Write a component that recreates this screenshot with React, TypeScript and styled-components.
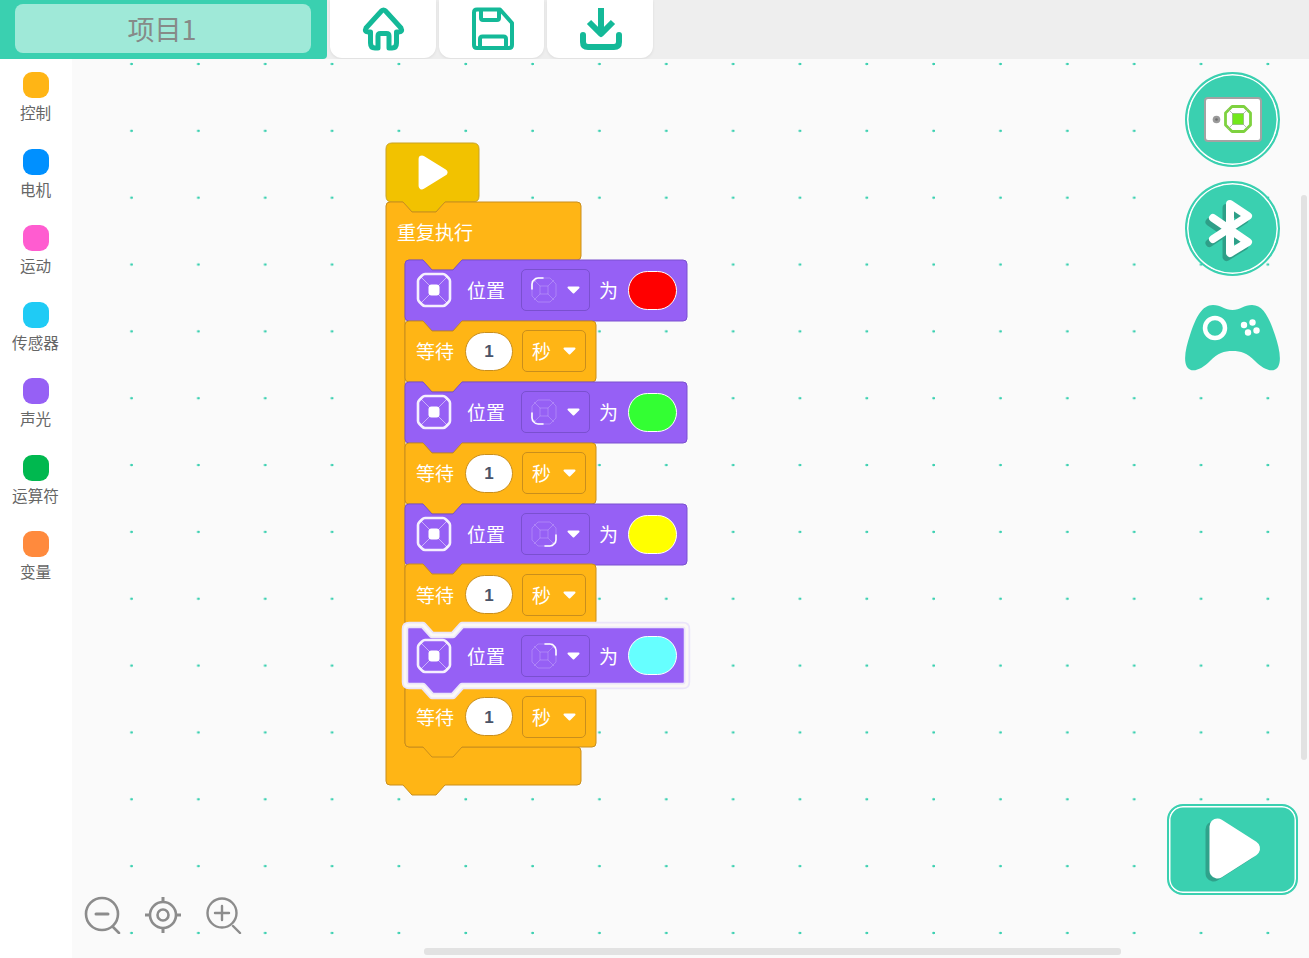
import React from 'react'
import styled, { createGlobalStyle } from 'styled-components'

type Corner = 'tl' | 'tr' | 'br' | 'bl'

const TEAL = '#3ad0b0'
const ICON_GREEN = '#14b998'
const ORANGE = '#ffb515'
const ORANGE_LINE = '#c98e1c'
const PURPLE = '#9660f5'
const PURPLE_LINE = '#7a50cf'

const GlobalStyle = createGlobalStyle`
  html, body {
    margin: 0;
    height: 100%;
    overflow: hidden;
    background: #fafafa;
  }
  #root {
    height: 100%;
  }
`

/* PAGE STYLES */
const Page = styled.div`
  width: 100%;
  height: 100vh;
  display: flex;
  flex-direction: column;
  font-family: 'Noto Sans CJK SC', 'Noto Sans', sans-serif;
`

const TopBar = styled.div`
  height: 59px;
  flex: none;
  display: flex;
  gap: 3px;
  background-color: #eeeeee;
`

const ProjectPanel = styled.div`
  width: 327px;
  height: 59px;
  box-sizing: border-box;
  padding: 4px 16px 6px 15px;
  background-color: ${TEAL};
  border-bottom-right-radius: 4px;
`

const ProjectName = styled.div`
  height: 100%;
  box-sizing: border-box;
  padding-right: 2px;
  display: flex;
  align-items: center;
  justify-content: center;
  background-color: #9fe9d8;
  border-radius: 8px;
  color: #868a88;
  font-size: 27px;
`

const ToolButton = styled.div`
  width: 105.6px;
  height: 58px;
  box-sizing: border-box;
  padding-left: 3px;
  display: flex;
  align-items: center;
  justify-content: center;
  background-color: #ffffff;
  border-bottom-left-radius: 12px;
  border-bottom-right-radius: 12px;
  box-shadow: 0 1px 3px rgba(0, 0, 0, 0.08);
`

const Body = styled.div`
  flex: 1;
  display: flex;
  min-height: 0;
`

const Sidebar = styled.div`
  width: 72px;
  flex: none;
  box-sizing: border-box;
  padding-right: 1px;
  background-color: #ffffff;
`

const Category = styled.div`
  height: 76.5px;
  box-sizing: border-box;
  padding-top: 13px;
  display: flex;
  flex-direction: column;
  align-items: center;
  color: #666666;
  font-size: 15.6px;
  line-height: 20px;
`

const CategoryDot = styled.div<{ $color: string }>`
  width: 26px;
  height: 26px;
  margin-bottom: 4px;
  border-radius: 9px;
  background-color: ${({ $color }) => $color};
`

const Canvas = styled.div`
  position: relative;
  flex: 1;
  overflow: hidden;
  background-color: #fafafa;
  background-image: radial-gradient(circle at 59.5px 5px, ${TEAL} 1px, transparent 1.6px);
  background-size: 66.85px 66.85px;
`

/* BLOCK STYLES */
const Script = styled.div`
  position: absolute;
  left: 314px;
  top: 84px;
  width: 320px;
`

const Shape = styled.svg`
  position: absolute;
  left: 0;
  top: 0;
  overflow: visible;
`

const HatBlock = styled.div`
  position: relative;
  width: 93px;
  height: 59px;
  display: flex;
  align-items: center;
  justify-content: center;
`

const HatGlyph = styled.div`
  position: relative;
  display: flex;
`

const LoopBlock = styled.div`
  position: relative;
  width: 195px;
  height: 583px;
`

const LoopTitle = styled.div`
  position: relative;
  height: 58px;
  box-sizing: border-box;
  padding-left: 11px;
  display: flex;
  align-items: center;
  color: #ffffff;
  font-size: 19px;
`

const LoopBody = styled.div`
  display: flex;
  flex-direction: column;
  margin-left: 19px;
`

const Statement = styled.div<{ $selected?: boolean }>`
  position: relative;
  height: 60.9px;
  z-index: ${({ $selected }) => ($selected ? 2 : 'auto')};
`

const Row = styled.div`
  position: relative;
  width: max-content;
  height: 100%;
  box-sizing: border-box;
  padding-left: 11px;
  display: flex;
  align-items: center;
  color: #ffffff;
  font-size: 19px;
  white-space: nowrap;

  & > * {
    flex: none;
  }
`

const Label = styled.span<{ $left?: number; $right?: number }>`
  display: inline-block;
  padding-bottom: 1px;
  margin-left: ${({ $left }) => $left ?? 0}px;
  margin-right: ${({ $right }) => $right ?? 0}px;
`

const Dropdown = styled.div<{ $line: string; $width: number; $gap: number }>`
  width: ${({ $width }) => $width}px;
  height: 42px;
  box-sizing: border-box;
  padding-left: 9px;
  display: flex;
  align-items: center;
  gap: ${({ $gap }) => $gap}px;
  border: 1px solid ${({ $line }) => $line};
  border-radius: 5px;
`

const ColorPill = styled.div<{ $color: string }>`
  width: 49px;
  height: 39px;
  margin-left: 10px;
  box-sizing: border-box;
  border: 1px solid #ffffff;
  border-radius: 20px;
  background-color: ${({ $color }) => $color};
`

const NumberPill = styled.div`
  width: 48px;
  height: 39px;
  margin: 0 9px 0 11px;
  box-sizing: border-box;
  padding-top: 2px;
  display: flex;
  align-items: center;
  justify-content: center;
  border: 1px solid ${ORANGE_LINE};
  border-radius: 20px;
  background-color: #ffffff;
  color: #4a5468;
  font-family: 'Liberation Sans', sans-serif;
  font-size: 17px;
  font-weight: 700;
`

/* OVERLAY STYLES */
const RightDock = styled.div`
  position: absolute;
  right: 29px;
  top: 13px;
  width: 95px;
  display: flex;
  flex-direction: column;
  align-items: center;
  gap: 14px;
`

const RoundButton = styled.div`
  width: 95px;
  height: 95px;
  box-sizing: border-box;
  display: flex;
  align-items: center;
  justify-content: center;
  border: 2.5px solid ${TEAL};
  border-radius: 50%;
  background-color: ${TEAL};
  box-shadow: inset 0 0 0 1.5px #ffffff;
`

const BoardCard = styled.div`
  width: 58px;
  height: 45px;
  margin-bottom: 1px;
  box-sizing: border-box;
  padding-left: 6px;
  display: flex;
  align-items: center;
  gap: 3px;
  background-color: #ffffff;
  border: 2px solid #a3a3a3;
  border-radius: 4px;
`

const GamepadSlot = styled.div`
  margin-top: 15px;
  display: flex;
`

const RunButton = styled.div`
  position: absolute;
  right: 11px;
  bottom: 63px;
  width: 131px;
  height: 91px;
  box-sizing: border-box;
  display: flex;
  align-items: center;
  justify-content: center;
  border: 2px solid ${TEAL};
  border-radius: 16px;
  background-color: ${TEAL};
  box-shadow: inset 0 0 0 1.5px #ffffff;
`

const ZoomControls = styled.div`
  position: absolute;
  left: 12px;
  bottom: 24px;
  display: flex;
  gap: 22px;
`

const VerticalScroll = styled.div`
  position: absolute;
  right: 2px;
  top: 136px;
  width: 6px;
  height: 565px;
  border-radius: 3px;
  background-color: #e2e2e2;
`

const HorizontalScroll = styled.div`
  position: absolute;
  left: 352px;
  bottom: 3px;
  width: 697px;
  height: 7px;
  border-radius: 3px;
  background-color: #e2e2e2;
`

/* SHAPES */
const tabTop = (x: number, span: number) => `H${x} l9 10 h${span} l9 -10`
const tabBottom = (x: number, span: number) => `H${x + span + 18} l-9 10 h-${span} l-9 -10`

const statementPath = (w: number, h: number) =>
  `M0 4 Q0 0 4 0 ${tabTop(18, 21)} H${w - 4} Q${w} 0 ${w} 4 V${h - 4} Q${w} ${h} ${w - 4} ${h} ${tabBottom(18, 21)} H4 Q0 ${h} 0 ${h - 4} Z`

const hatPath = 'M0 6 Q0 0 6 0 H87 Q93 0 93 6 V53 Q93 59 87 59 H59 l-9 10 h-24 l-9 -10 H6 Q0 59 0 53 Z'

const loopPath =
  `M0 4 Q0 0 4 0 ${tabTop(17, 24)} H191 Q195 0 195 4 V54 Q195 58 191 58 ${tabBottom(37, 21)} H23 Q19 58 19 62 V541 Q19 545 23 545 H191 Q195 545 195 549 V579 Q195 583 191 583 ${tabBottom(17, 24)} H4 Q0 583 0 579 Z`

const BlockOutline = ({ w, h, d, fill, line, selected }: { w: number; h: number; d: string; fill: string; line: string; selected?: boolean }) => (
  <Shape width={w} height={h}>
    <path d={d} fill={fill} stroke={line} strokeWidth={1} strokeLinejoin="round" />
    {selected && <path d={d} fill="none" stroke="#ebe5fa" strokeWidth={6.5} strokeLinejoin="round" />}
    {selected && <path d={d} fill="none" stroke="#fbf8f6" strokeWidth={3} strokeLinejoin="round" />}
  </Shape>
)

const Caret = () => (
  <svg width="13" height="8" viewBox="0 0 13 8">
    <path d="M1.5 1.5 H11.5 L6.5 6.5 Z" fill="#fff" stroke="#fff" strokeWidth="2" strokeLinejoin="round" />
  </svg>
)

const MatrixIcon = () => (
  <svg width="36" height="36" viewBox="0 0 36 36" fill="none">
    <path d="M18 18 L4 4 M18 18 L32 4 M18 18 L32 32 M18 18 L4 32" stroke="#fff" strokeOpacity="0.5" strokeWidth="1" />
    <path d="M9 2 H27 Q28.5 2 30 3.5 L32.5 6 Q34 7.5 34 9 V27 Q34 28.5 32.5 30 L30 32.5 Q28.5 34 27 34 H9 Q7.5 34 6 32.5 L3.5 30 Q2 28.5 2 27 V9 Q2 7.5 3.5 6 L6 3.5 Q7.5 2 9 2 Z" stroke="#fff" strokeOpacity="0.9" strokeWidth="2.6" />
    <rect x="12.5" y="12.5" width="11" height="11" rx="3" fill="#fff" />
  </svg>
)

const cornerTurn: Record<Corner, number> = { tl: 0, tr: 90, br: 180, bl: 270 }

const PositionGlyph = ({ corner }: { corner: Corner }) => (
  <svg width="26" height="26" viewBox="0 0 26 26" fill="none">
    <g stroke="#fff" strokeOpacity="0.28" strokeWidth="0.8">
      <path d="M7 1 H19 L25 7 V19 L19 25 H7 L1 19 V7 Z" />
      <path d="M9 9 H17 V17 H9 Z M9 9 L3 3 M17 9 L23 3 M17 17 L23 23 M9 17 L3 23" />
    </g>
    <path d="M1 12 V7 Q1 4 3 3 Q4.5 1 7 1 H12" stroke="#fff" strokeWidth="1.6" strokeLinecap="round" transform={`rotate(${cornerTurn[corner]} 13 13)`} />
  </svg>
)

const PlayGlyph = ({ size }: { size: number }) => (
  <svg width={size} height={size * 1.16} viewBox="0 0 30 35">
    <path d="M4 4 L26 17.5 L4 31 Z" fill="#fff" stroke="#fff" strokeWidth="7" strokeLinejoin="round" />
  </svg>
)

const RunGlyph = () => (
  <svg width="60" height="68" viewBox="0 0 60 68" style={{ overflow: 'visible' }}>
    <path d="M10.5 13.5 L45 35.5 L10.5 57.5 Z" fill="#2fa28b" stroke="#2fa28b" strokeWidth="16" strokeLinejoin="round" />
    <path d="M14.5 10.5 L49 32.5 L14.5 54.5 Z" fill="#fff" stroke="#fff" strokeWidth="16" strokeLinejoin="round" />
  </svg>
)

const HomeIcon = () => (
  <svg width="44" height="44" viewBox="0 0 44 44" fill="none" stroke={ICON_GREEN} strokeWidth="5" strokeLinejoin="round">
    <path d="M21.5 3 Q23 3 24 4.5 L39 21 Q41 25 37 25 H34.5 V36 Q34.5 41 30 41 H27 V29 Q27 26.5 24.5 26.5 H18.5 Q16 26.5 16 29 V41 H13 Q8.5 41 8.5 36 V25 H6 Q2 25 4 21 L19 4.5 Q20 3 21.5 3 Z" />
  </svg>
)

const SaveIcon = () => (
  <svg width="44" height="44" viewBox="0 0 44 44" fill="none" stroke={ICON_GREEN} strokeWidth="4" strokeLinejoin="round">
    <path d="M6 2.5 H29 L41 16 V38 Q41 41 38 41 H6 Q3 41 3 38 V5.5 Q3 2.5 6 2.5 Z" />
    <path d="M10 3 V11 Q10 13 12 13 H26 Q28 13 28 11 V3" />
    <path d="M9 41 V32 Q9 29.5 11.5 29.5 H32.5 Q35 29.5 35 32 V41" />
  </svg>
)

const DownloadIcon = () => (
  <svg width="44" height="44" viewBox="0 0 44 44" fill="none" stroke={ICON_GREEN} strokeWidth="6" strokeLinejoin="round">
    <path d="M22 1 V25" />
    <path d="M10 15 L22 27 L34 15" />
    <path d="M4 28 V35 Q4 40 9 40 H35 Q40 40 40 35 V28" strokeLinecap="round" />
  </svg>
)

const BoardGlyph = () => (
  <>
    <svg width="9" height="9" viewBox="0 0 9 9">
      <circle cx="4.5" cy="4.5" r="3.8" fill="#9a9a9a" />
      <circle cx="4.5" cy="4.5" r="1.3" fill="#6e6e6e" />
    </svg>
    <svg width="28" height="28" viewBox="0 0 28 28" fill="none">
      <path d="M8 1.5 H20 L26.5 8 V20 L20 26.5 H8 L1.5 20 V8 Z" fill="#fff" stroke="#7ed23f" strokeWidth="2.8" strokeLinejoin="round" />
      <path d="M9 9 L4 4 M19 9 L24 4 M19 19 L24 24 M9 19 L4 24" stroke="#a8a8a8" strokeWidth="0.8" />
      <rect x="8.5" y="8.5" width="11" height="11" fill="#72e81a" stroke="#8fb97a" strokeWidth="0.8" />
    </svg>
  </>
)

const BluetoothIcon = () => {
  const d = 'M11 24 L46 48 L28 59 V10 L46 22 L11 45'
  return (
    <svg width="62" height="70" viewBox="0 0 62 70" fill="none" strokeWidth="8" strokeLinejoin="round" strokeLinecap="round">
      <path d={d} stroke="#2e9f88" transform="translate(-3.5 4)" />
      <path d={d} stroke="#fff" />
    </svg>
  )
}

const GamepadIcon = () => (
  <svg width="95" height="68" viewBox="0 0 95 68" style={{ overflow: 'visible' }}>
    <path
      d="M28 0 C36 0 40 5 47.5 5 C55 5 59 0 67 0 C78 0 84 12 90 30 C94 42 97 55 93 62 C88 69 78 64 70 56 C62 48 56 46 47.5 46 C39 46 33 48 25 56 C17 64 7 69 2 62 C-2 55 1 42 5 30 C11 12 17 0 28 0Z"
      fill={TEAL}
    />
    <circle cx="30" cy="23" r="10" fill="none" stroke="#fff" strokeWidth="4.5" />
    <circle cx="59" cy="20" r="3.2" fill="#fff" />
    <circle cx="67.5" cy="17.5" r="3.2" fill="#fff" />
    <circle cx="63" cy="27.5" r="3.2" fill="#fff" />
    <circle cx="71.5" cy="25.5" r="3.2" fill="#fff" />
  </svg>
)

const ZoomOutIcon = () => (
  <svg width="38" height="38" viewBox="0 0 38 38" fill="none" stroke="#8c8c8c" strokeWidth="2.6" strokeLinecap="round">
    <circle cx="18" cy="18" r="16" />
    <path d="M29 31 L35 37" />
    <path d="M12 18 H24" strokeWidth="3" />
  </svg>
)

const LocateIcon = () => (
  <svg width="38" height="38" viewBox="0 0 38 38" fill="none" stroke="#8c8c8c" strokeWidth="2.6">
    <circle cx="19" cy="19" r="13" />
    <circle cx="19" cy="19" r="5.5" />
    <path d="M19 1 V6 M19 32 V37 M1 19 H6 M32 19 H37" strokeWidth="3" />
  </svg>
)

const ZoomInIcon = () => (
  <svg width="38" height="38" viewBox="0 0 38 38" fill="none" stroke="#8c8c8c" strokeWidth="2.4" strokeLinecap="round">
    <circle cx="18" cy="17" r="14.5" />
    <path d="M29 30 L36 37" />
    <path d="M11 17 H25 M18 10 V24" />
  </svg>
)

/* COMPONENTS */
const LightBlock = ({ corner, color, selected }: { corner: Corner; color: string; selected?: boolean }) => (
  <Statement $selected={selected}>
    <BlockOutline w={282} h={61} d={statementPath(282, 61)} fill={PURPLE} line={PURPLE_LINE} selected={selected} />
    <Row>
      <MatrixIcon />
      <Label $left={15} $right={16}>位置</Label>
      <Dropdown $line={PURPLE_LINE} $width={69} $gap={10}>
        <PositionGlyph corner={corner} />
        <Caret />
      </Dropdown>
      <Label $left={9}>为</Label>
      <ColorPill $color={color} />
    </Row>
  </Statement>
)

const WaitBlock = () => (
  <Statement>
    <BlockOutline w={191} h={61} d={statementPath(191, 61)} fill={ORANGE} line={ORANGE_LINE} />
    <Row>
      <Label>等待</Label>
      <NumberPill>1</NumberPill>
      <Dropdown $line={ORANGE_LINE} $width={64} $gap={12}>
        <Label>秒</Label>
        <Caret />
      </Dropdown>
    </Row>
  </Statement>
)

const categories = [
  { name: '控制', color: '#ffb515' },
  { name: '电机', color: '#0090ff' },
  { name: '运动', color: '#ff5cd0' },
  { name: '传感器', color: '#1fcbf5' },
  { name: '声光', color: '#9660f5' },
  { name: '运算符', color: '#00b84f' },
  { name: '变量', color: '#ff8a3d' },
]

const App: React.FC = () => {
  return (
    <Page>
      <GlobalStyle />
      <TopBar>
        <ProjectPanel>
          <ProjectName>项目1</ProjectName>
        </ProjectPanel>
        <ToolButton><HomeIcon /></ToolButton>
        <ToolButton><SaveIcon /></ToolButton>
        <ToolButton><DownloadIcon /></ToolButton>
      </TopBar>
      <Body>
        <Sidebar>
          {categories.map((c) => (
            <Category key={c.name}>
              <CategoryDot $color={c.color} />
              {c.name}
            </Category>
          ))}
        </Sidebar>
        <Canvas>
          <Script>
            <HatBlock>
              <BlockOutline w={93} h={59} d={hatPath} fill="#f2c200" line="#c9a222" />
              <HatGlyph>
                <PlayGlyph size={30} />
              </HatGlyph>
            </HatBlock>
            <LoopBlock>
              <BlockOutline w={195} h={583} d={loopPath} fill={ORANGE} line={ORANGE_LINE} />
              <LoopTitle>重复执行</LoopTitle>
              <LoopBody>
                <LightBlock corner="tl" color="#ff0000" />
                <WaitBlock />
                <LightBlock corner="bl" color="#33ff33" />
                <WaitBlock />
                <LightBlock corner="br" color="#ffff00" />
                <WaitBlock />
                <LightBlock corner="tr" color="#66ffff" selected />
                <WaitBlock />
              </LoopBody>
            </LoopBlock>
          </Script>
          <RightDock>
            <RoundButton>
              <BoardCard>
                <BoardGlyph />
              </BoardCard>
            </RoundButton>
            <RoundButton>
              <BluetoothIcon />
            </RoundButton>
            <GamepadSlot>
              <GamepadIcon />
            </GamepadSlot>
          </RightDock>
          <RunButton>
            <RunGlyph />
          </RunButton>
          <ZoomControls>
            <ZoomOutIcon />
            <LocateIcon />
            <ZoomInIcon />
          </ZoomControls>
          <VerticalScroll />
          <HorizontalScroll />
        </Canvas>
      </Body>
    </Page>
  )
}

export default App
